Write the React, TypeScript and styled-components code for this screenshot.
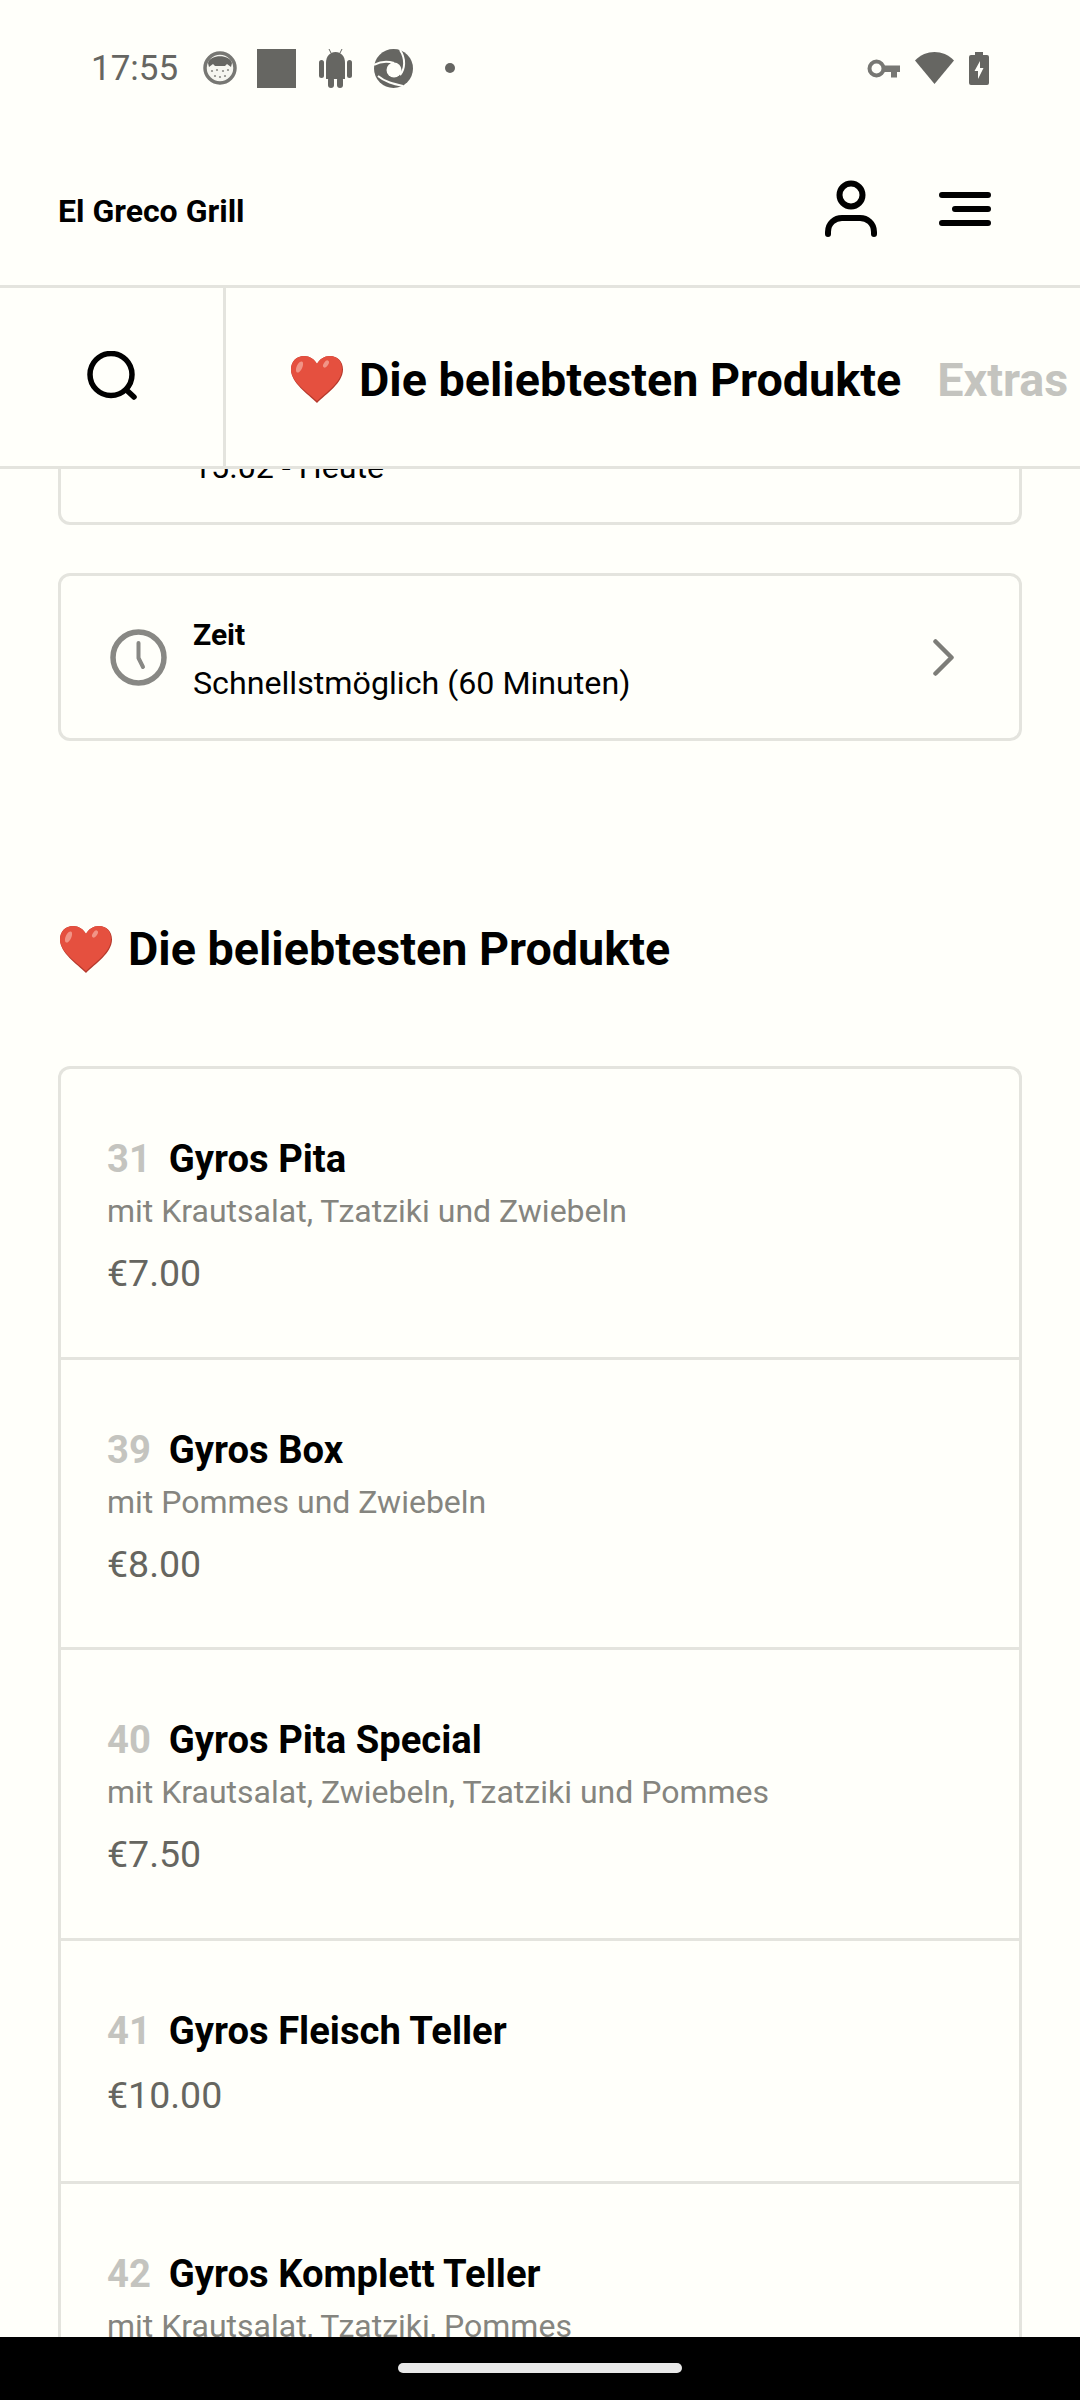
import React from "react";
import styled, { createGlobalStyle } from "styled-components";

const BG = "#fffffa";
const LINE = "#e4e4de";

const Global = createGlobalStyle`
  html, body { margin: 0; padding: 0; background: ${BG}; }
  * { box-sizing: border-box; }
`;

const Screen = styled.div`
  width: 1080px;
  height: 2400px;
  display: flex;
  flex-direction: column;
  overflow: hidden;
  background: ${BG};
  font-family: Roboto, "Liberation Sans", sans-serif;
  color: #000;
`;

const StatusBar = styled.div`
  height: 136px;
  flex: none;
  display: flex;
  align-items: center;
  padding: 0 91px 0 91px;
  color: #666662;
`;

const Clock = styled.span`
  font-size: 35px;
  width: 112px;
`;

const StatusIcons = styled.div`
  display: flex;
  align-items: center;
  gap: ${(p: { $gap: number }) => p.$gap}px;
`;

const Spacer = styled.div`
  flex: 1;
`;

const Square = styled.div`
  width: 39px;
  height: 39px;
  margin: 0 1px 0 -2px;
  background: #666662;
`;

const NotificationDot = styled.div`
  width: 10px;
  height: 10px;
  margin-left: 10px;
  border-radius: 50%;
  background: #666662;
`;

const Header = styled.header`
  height: 152px;
  flex: none;
  display: flex;
  align-items: center;
  padding: 0 89px 0 58px;
  border-bottom: 3px solid ${LINE};
`;

const Brand = styled.div`
  font-size: 32px;
  font-weight: 700;
  flex: 1;
`;

const HeaderActions = styled.div`
  display: flex;
  align-items: center;
  gap: 62px;
  padding-bottom: 4px;
`;

const Nav = styled.nav`
  height: 181px;
  flex: none;
  display: flex;
  border-bottom: 3px solid ${LINE};
  position: relative;
  z-index: 1;
  background: ${BG};
`;

const SearchCell = styled.div`
  width: 226px;
  flex: none;
  display: flex;
  align-items: center;
  justify-content: center;
  padding-bottom: 3px;
  border-right: 3px solid ${LINE};
`;

const Tabs = styled.div`
  flex: 1;
  display: flex;
  align-items: center;
  padding: 5px 0 0 65px;
  gap: 36px;
  overflow: hidden;
  white-space: nowrap;
`;

const Tab = styled.div<{ $active?: boolean }>`
  display: flex;
  align-items: center;
  gap: 16px;
  font-size: 46.7px;
  font-weight: 700;
  color: ${(p) => (p.$active ? "#000" : "#c4c4bf")};
`;

const Viewport = styled.main`
  flex: 1;
  min-height: 0;
  overflow: hidden;
`;

const Scrolled = styled.div`
  margin-top: -112px;
  padding: 0 58px;
  display: flex;
  flex-direction: column;
`;

const InfoCard = styled.div`
  height: 168px;
  margin-bottom: 48px;
  border: 3px solid ${LINE};
  border-radius: 12px;
  display: flex;
  align-items: center;
  padding: 0 65px 0 49px;
`;

const InfoIcon = styled.div`
  width: 83px;
  flex: none;
  display: flex;
`;

const InfoText = styled.div`
  flex: 1;
  display: flex;
  flex-direction: column;
  padding-top: 3px;
`;

const InfoLabel = styled.div`
  font-size: 30px;
  font-weight: 700;
  line-height: 48px;
`;

const InfoValue = styled.div`
  font-size: 32.2px;
  line-height: 48px;
`;

const Section = styled.h2`
  margin: 130px 0 87px;
  padding-left: 2px;
  height: 60px;
  display: flex;
  align-items: center;
  gap: 16px;
  font-size: 46.7px;
  font-weight: 700;
`;

const List = styled.div`
  border: 3px solid ${LINE};
  border-radius: 12px 12px 0 0;
  border-bottom: none;
`;

const Row = styled.div`
  padding: 66px 46px 0;
  border-bottom: 3px solid ${LINE};
  display: flex;
  flex-direction: column;
  height: ${(p: { $h: number }) => p.$h}px;
`;

const NameLine = styled.div`
  display: flex;
  align-items: baseline;
  gap: 18px;
  font-size: 38.2px;
  font-weight: 700;
  line-height: 48px;
`;

const Num = styled.span`
  color: #c4c4bf;
`;

const Desc = styled.div`
  font-size: 32px;
  line-height: 44px;
  margin-top: 6px;
  color: #85857f;
`;

const Price = styled.div`
  font-size: 37.5px;
  line-height: 50px;
  margin-top: 15px;
  color: #666660;
`;

const BottomBar = styled.div`
  height: 63px;
  flex: none;
  background: #000;
  display: flex;
  justify-content: center;
  padding-top: 26px;
  position: relative;
  z-index: 2;
`;

const Pill = styled.div`
  width: 284px;
  height: 10px;
  border-radius: 5px;
  background: #e8e8e8;
`;

const CookieIcon = () => (
  <svg width="34" height="34" viewBox="0 0 34 34">
    <circle cx="17" cy="17" r="15" fill="#f6f6f0" stroke="#777773" strokeWidth="3.5" />
    <path d="M5 12 C7 3 27 3 29 12 L28 16 L24 13 L22 15 L12 15 L10 13 L6 16 Z" fill="#666662" />
    {[[9, 20], [14, 19], [20, 20], [25, 19], [12, 25], [17, 26], [22, 25]].map(([x, y]) => (
      <circle key={`${x}-${y}`} cx={x} cy={y} r="1.1" fill="#8c8c88" />
    ))}
  </svg>
);

const AndroidIcon = () => (
  <svg width="33" height="39" viewBox="0 0 33 39" fill="#666662">
    <rect x="0" y="11" width="5" height="18" rx="2.5" />
    <rect x="28" y="11" width="5" height="18" rx="2.5" />
    <path d="M7 14 C7 7 11 3 16.5 3 C22 3 26 7 26 14 V30 H7 Z" />
    <rect x="9" y="28" width="6" height="11" rx="3" />
    <rect x="18" y="28" width="6" height="11" rx="3" />
    <path d="M10 0 L12 4 M23 0 L21 4" stroke="#666662" strokeWidth="1" />
  </svg>
);

const ShutterIcon = () => (
  <svg width="39" height="39" viewBox="0 0 39 39">
    <circle cx="19.5" cy="19.5" r="19.5" fill="#666662" />
    <circle cx="20" cy="21" r="7.5" fill="#fffffa" />
    <g fill="none" stroke="#fffffa" strokeWidth="2">
      <path d="M0 16 C7 12 14 12 20 14" />
      <path d="M26 1 C32 10 31 20 26 26" />
      <path d="M4 27 C11 33 20 35 29 37" />
    </g>
  </svg>
);

const KeyIcon = () => (
  <svg width="33" height="19" viewBox="0 0 33 19">
    <circle cx="9.5" cy="9.5" r="7" fill="none" stroke="#777773" strokeWidth="4" />
    <path d="M17 6.5 H33 V13 H30 V18.5 H24 V13 H17 Z" fill="#777773" />
  </svg>
);

const WifiIcon = () => (
  <svg width="39" height="32" viewBox="0 0 39 32">
    <path d="M0 8.5 C11 -2.8 28 -2.8 39 8.5 L19.5 32 Z" fill="#666662" />
  </svg>
);

const BatteryIcon = () => (
  <svg width="20" height="33" viewBox="0 0 20 33">
    <path d="M6 0 H14 V3 H18 Q20 3 20 5 V31 Q20 33 18 33 H2 Q0 33 0 31 V5 Q0 3 2 3 H6 Z" fill="#666662" />
    <path d="M11 9 L5.5 19 H9 V27 L14.5 16 H11 Z" fill="#fffffa" />
  </svg>
);

const PersonIcon = () => (
  <svg width="52" height="57" viewBox="0 0 52 57" fill="none" stroke="#000" strokeWidth="6" strokeLinecap="round">
    <circle cx="26" cy="15" r="11.5" />
    <path d="M3 54 V52 C3 43 10 38 17 38 H35 C42 38 49 43 49 52 V54" />
  </svg>
);

const MenuIcon = () => (
  <svg width="52" height="34" viewBox="0 0 52 34" fill="none" stroke="#000" strokeWidth="6" strokeLinecap="round">
    <path d="M3 3 H49 M16 17 H49 M3 31 H49" />
  </svg>
);

const SearchIcon = () => (
  <svg width="50" height="49" viewBox="0 0 50 49" fill="none" stroke="#000" strokeWidth="5.5" strokeLinecap="round">
    <circle cx="24" cy="23.5" r="21" />
    <path d="M40 39.5 L47 46" />
  </svg>
);

const ClockIcon = () => (
  <svg width="57" height="57" viewBox="0 0 57 57" fill="none" stroke="#888884" strokeWidth="5.5" strokeLinecap="round" strokeLinejoin="round">
    <circle cx="28.5" cy="28.5" r="25.5" />
    <path d="M28.5 14 V29 L33 38" strokeWidth="4" />
  </svg>
);

const CalendarIcon = () => (
  <svg width="52" height="52" viewBox="0 0 52 52" fill="none" stroke="#888884" strokeWidth="5" strokeLinecap="round" strokeLinejoin="round">
    <rect x="3" y="7" width="46" height="42" rx="5" />
    <path d="M3 20 H49 M15 3 V11 M37 3 V11" />
  </svg>
);

const Chevron = () => (
  <svg width="21" height="37" viewBox="0 0 21 37" fill="none" stroke="#7d7d78" strokeWidth="4.5" strokeLinecap="round" strokeLinejoin="round">
    <path d="M2.5 2.5 L18.5 18.5 L2.5 34.5" />
  </svg>
);

const Heart = () => (
  <svg width="52" height="47" viewBox="0 0 52 47">
    <path d="M26 47 C17 38 0 27 0 13.5 C0 5 6 0 13 0 C18.5 0 23.5 3 26 8 C28.5 3 33.5 0 39 0 C46 0 52 5 52 13.5 C52 27 35 38 26 47 Z" fill="#b5392c" />
    <path d="M26 45 C17 36.5 0 26 0 13.5 C0 5 6 0 13 0 C18.5 0 23.5 3 26 8 C28.5 3 33.5 0 39 0 C46 0 51 5 51 13 C51 26 35 36.5 26 45 Z" fill="#e5503f" />
    <ellipse cx="8.5" cy="11" rx="2.8" ry="6" fill="#f19486" transform="rotate(25 8.5 11)" />
    <ellipse cx="35" cy="8" rx="2.2" ry="4" fill="#f19486" transform="rotate(35 35 8)" />
  </svg>
);

const products = [
  { n: "31", name: "Gyros Pita", desc: "mit Krautsalat, Tzatziki und Zwiebeln", price: "€7.00", h: 290.5 },
  { n: "39", name: "Gyros Box", desc: "mit Pommes und Zwiebeln", price: "€8.00", h: 290.5 },
  { n: "40", name: "Gyros Pita Special", desc: "mit Krautsalat, Zwiebeln, Tzatziki und Pommes", price: "€7.50", h: 290.5 },
  { n: "41", name: "Gyros Fleisch Teller", price: "€10.00", h: 243.5 },
  { n: "42", name: "Gyros Komplett Teller", desc: "mit Krautsalat, Tzatziki, Pommes", price: "€12.00", h: 290.5 },
];

export default function App() {
  return (
    <Screen>
      <Global />
      <StatusBar>
        <Clock>17:55</Clock>
        <StatusIcons $gap={22}>
          <CookieIcon />
          <Square />
          <AndroidIcon />
          <ShutterIcon />
          <NotificationDot />
        </StatusIcons>
        <Spacer />
        <StatusIcons $gap={15}>
          <KeyIcon />
          <WifiIcon />
          <BatteryIcon />
        </StatusIcons>
      </StatusBar>
      <Header>
        <Brand>El Greco Grill</Brand>
        <HeaderActions>
          <PersonIcon />
          <MenuIcon />
        </HeaderActions>
      </Header>
      <Nav>
        <SearchCell>
          <SearchIcon />
        </SearchCell>
        <Tabs>
          <Tab $active>
            <Heart />
            Die beliebtesten Produkte
          </Tab>
          <Tab>Extras</Tab>
        </Tabs>
      </Nav>
      <Viewport>
        <Scrolled>
          <InfoCard>
            <InfoIcon>
              <CalendarIcon />
            </InfoIcon>
            <InfoText>
              <InfoLabel>Datum</InfoLabel>
              <InfoValue>15.02 - Heute</InfoValue>
            </InfoText>
            <Chevron />
          </InfoCard>
          <InfoCard>
            <InfoIcon>
              <ClockIcon />
            </InfoIcon>
            <InfoText>
              <InfoLabel>Zeit</InfoLabel>
              <InfoValue>Schnellstmöglich (60 Minuten)</InfoValue>
            </InfoText>
            <Chevron />
          </InfoCard>
          <Section>
            <Heart />
            Die beliebtesten Produkte
          </Section>
          <List>
            {products.map((p) => (
              <Row key={p.n} $h={p.h}>
                <NameLine>
                  <Num>{p.n}</Num>
                  {p.name}
                </NameLine>
                {p.desc && <Desc>{p.desc}</Desc>}
                <Price>{p.price}</Price>
              </Row>
            ))}
          </List>
        </Scrolled>
      </Viewport>
      <BottomBar>
        <Pill />
      </BottomBar>
    </Screen>
  );
}
